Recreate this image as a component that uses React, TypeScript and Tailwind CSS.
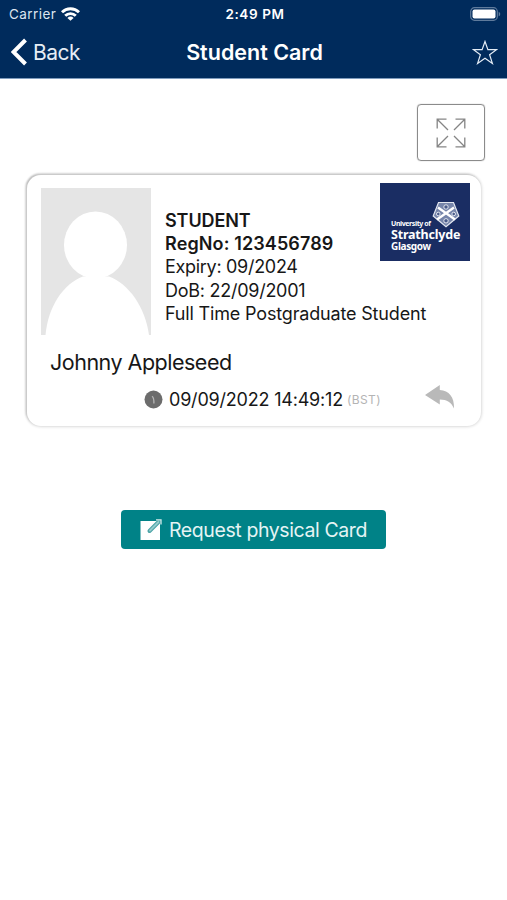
import type { ReactNode } from "react";

type CardLine = {
  text: string;
  className: string;
};

const lines: CardLine[] = [
  { text: "STUDENT", className: "font-semibold tracking-[-0.1px]" },
  { text: "RegNo: 123456789", className: "font-semibold tracking-[0.12px]" },
  { text: "Expiry: 09/2024", className: "tracking-[-0.3px]" },
  { text: "DoB: 22/09/2001", className: "tracking-[-0.26px]" },
  { text: "Full Time Postgraduate Student", className: "tracking-[-0.17px]" },
];

function WifiIcon() {
  return (
    <svg width="19" height="14" viewBox="0 0 19 14" fill="none" stroke="white" strokeWidth="2.9">
      <path d="M1 5.2a12.2 12.2 0 0 1 17 0" />
      <path d="M4.2 8.8a7.6 7.6 0 0 1 10.6 0" />
      <path d="M9.5 13.8 6.4 11a4.6 4.6 0 0 1 6.2 0Z" fill="white" stroke="none" />
    </svg>
  );
}

function BatteryIcon() {
  return (
    <svg width="31" height="14" viewBox="0 0 31 14">
      <rect x="0.7" y="0.7" width="26.6" height="12.6" rx="3.8" fill="none" stroke="#5f7b9c" strokeWidth="1.2" />
      <rect x="2.5" y="2.4" width="23" height="9.2" rx="2" fill="white" />
      <path d="M28.7 4.7c2 .8 2 3.8 0 4.6Z" fill="#5f7b9c" />
    </svg>
  );
}

function StarIcon() {
  return (
    <svg width="26" height="25" viewBox="0 0 26 25" fill="none" stroke="#e4edf6" strokeWidth="1.2">
      <path d="M13 1.5 15.9 9.7H24.5L17.6 14.8 20.4 23.4 13 18.2 5.6 23.4 8.4 14.8 1.5 9.7H10.1Z" />
    </svg>
  );
}

function ExpandIcon() {
  return (
    <svg width="30" height="30" viewBox="0 0 30 30" fill="none" stroke="#858585" strokeWidth="1.3">
      <path d="M12 12 1.2 1.2M10.5 1.2H1.2V10.5" />
      <path d="M18 12 28.8 1.2M19.5 1.2H28.8V10.5" />
      <path d="M12 18 1.2 28.8M10.5 28.8H1.2V19.5" />
      <path d="M18 18 28.8 28.8M19.5 28.8H28.8V19.5" />
    </svg>
  );
}

function Photo() {
  return (
    <svg width="110" height="147" viewBox="0 0 110 147" className="shrink-0">
      <rect width="110" height="147" fill="#e5e5e5" />
      <ellipse cx="54.5" cy="57" rx="31.5" ry="33.5" fill="white" />
      <path d="M4.5 147C7 119 22 96 42 88.5H68C88 96 104 119 108 147Z" fill="white" />
    </svg>
  );
}

function Crest() {
  return (
    <svg width="28" height="27" viewBox="0 0 28 27" fill="none" stroke="white">
      <path d="M6.5 1.5H21.5L26.8 15 14 25.8 1.2 15Z" fill="#7685aa" stroke="#e3e7f0" strokeWidth="1.2" />
      <path d="M6 6.5 23 18.5M22 6.5 5 18.5" strokeWidth="2.4" />
      <circle cx="14" cy="6" r="2.2" fill="#4a5c8c" strokeWidth="0.8" />
      <circle cx="6.3" cy="13" r="1.8" fill="#4a5c8c" strokeWidth="0.8" />
      <circle cx="21.7" cy="13" r="1.8" fill="#4a5c8c" strokeWidth="0.8" />
      <circle cx="14" cy="19.8" r="2.2" fill="#4a5c8c" strokeWidth="0.8" />
    </svg>
  );
}

function UniversityLogo() {
  return (
    <div className="absolute left-[353px] top-[8px] h-[78px] w-[90px] bg-[#1a2d63] font-['Noto_Sans','Open_Sans',sans-serif] font-bold text-white">
      <div className="absolute left-[52px] top-[18px]">
        <Crest />
      </div>
      <div className="flex flex-col whitespace-nowrap pl-[11px] pt-[36px]">
        <span className="text-[7px] leading-[10px] tracking-[-0.4px]">University of</span>
        <span className="text-[12.5px] leading-[11px] tracking-[-0.2px]">Strathclyde</span>
        <span className="text-[10px] leading-[12px] tracking-[-0.35px]">Glasgow</span>
      </div>
    </div>
  );
}

function ClockIcon() {
  return (
    <svg width="19" height="19" viewBox="0 0 19 19">
      <circle cx="9.5" cy="9.5" r="9" fill="#6c6c6c" />
      <path d="M8 6.3C9.6 7.2 10 8.8 9.9 13.5" fill="none" stroke="#b5b5b5" strokeWidth="1.3" />
    </svg>
  );
}

function ReplyIcon() {
  return (
    <svg width="30" height="24" viewBox="0 0 30 24" fill="#b9b9b9">
      <path d="M0 10 14.8 0V5C24 5.5 29.5 12 29 23.5 26.5 17.5 22 14.5 14.8 14.5V19.5Z" />
    </svg>
  );
}

function EditIcon() {
  return (
    <svg width="22" height="22" viewBox="0 0 22 22">
      <path d="M0.5 2H20V21H0.5Z" fill="white" />
      <path d="M9.5 12 18.5 3" stroke="#4ba3a6" strokeWidth="4" strokeLinecap="round" />
      <path d="M10 11.5 18.5 3" stroke="#93cbcd" strokeWidth="1.8" strokeLinecap="round" />
      <path d="M16 .8 21 .8 21 5.5" fill="none" stroke="#d4ecec" strokeWidth="1.3" />
    </svg>
  );
}

function Header({ children }: { children: ReactNode }) {
  return (
    <header className="h-[79px] border-b border-[#7f9cbd] bg-[#002b5c] text-white">
      <div className="grid h-[27px] grid-cols-3 items-center pl-[9px] pr-[6px] text-[13.5px]">
        <div className="flex items-center gap-[5px]">
          <span className="pt-px tracking-[0.42px] text-[#dce5ef]">Carrier</span>
          <WifiIcon />
        </div>
        <span className="pt-px text-center text-[13.5px] font-semibold tracking-[0.6px]">2:49 PM</span>
        <div className="flex justify-end">
          <BatteryIcon />
        </div>
      </div>
      {children}
    </header>
  );
}

export default function App() {
  return (
    <div className="min-h-[900px] w-[507px] bg-white font-['Inter','Liberation_Sans',sans-serif] text-[#171717]">
      <Header>
        <div className="grid h-[50px] grid-cols-[1fr_auto_1fr] items-center pl-[11px] pr-[9px]">
          <button className="flex items-center gap-[6px]">
            <svg width="16" height="28" viewBox="0 0 16 28" fill="none" stroke="white" strokeWidth="4">
              <path d="M14.5 2 2.5 14 14.5 26" />
            </svg>
            <span className="pt-px text-[21px] tracking-[-0.5px] text-[#e6edf5]">Back</span>
          </button>
          <h1 className="pt-px text-[21.5px] font-semibold tracking-[0px]">Student Card</h1>
          <button className="flex justify-end">
            <StarIcon />
          </button>
        </div>
      </Header>

      <main>
        <div className="flex justify-end pr-[22px] pt-[25px]">
          <button className="flex h-[57px] w-[68px] items-center justify-center rounded-[4px] border border-[#8b8b8b] shadow-[0_0_1px_#8b8b8b]">
            <ExpandIcon />
          </button>
        </div>

        <section className="relative ml-[27px] mt-[14px] h-[251px] w-[454px] rounded-[14px] bg-white shadow-[0_0_3px_1px_#dcdcdc,-1px_-1px_2px_#8f8f8f]">
          <div className="flex gap-[14px] pl-[14px] pt-[13px]">
            <Photo />
            <div className="pt-[21px]">
              {lines.map((line) => (
                <p key={line.text} className={`whitespace-nowrap text-[18px] leading-[23.2px] ${line.className}`}>
                  {line.text}
                </p>
              ))}
            </div>
          </div>
          <UniversityLogo />
          <p className="pl-[23px] pt-[13px] text-[21.5px] leading-[28px] tracking-[-0.5px]">Johnny Appleseed</p>
          <div className="flex items-center pl-[117px] pt-[10px]">
            <ClockIcon />
            <span className="ml-[6px] pt-px text-[18px] leading-[26px] tracking-[-0.2px]">09/09/2022 14:49:12</span>
            <span className="ml-[4px] text-[12px] tracking-[0.4px] text-[#b4b4b4]">(BST)</span>
            <button className="-mt-[6px] ml-[44px]">
              <ReplyIcon />
            </button>
          </div>
        </section>

        <div className="flex justify-center pt-[84px]">
          <button className="flex h-[39px] w-[265px] items-center rounded-[4px] bg-[#008287] pl-[19px] text-white">
            <EditIcon />
            <span className="ml-[7px] whitespace-nowrap pt-[2px] text-[19.5px] tracking-[-0.4px] text-[#e5f4f4]">Request physical Card</span>
          </button>
        </div>
      </main>
    </div>
  );
}
